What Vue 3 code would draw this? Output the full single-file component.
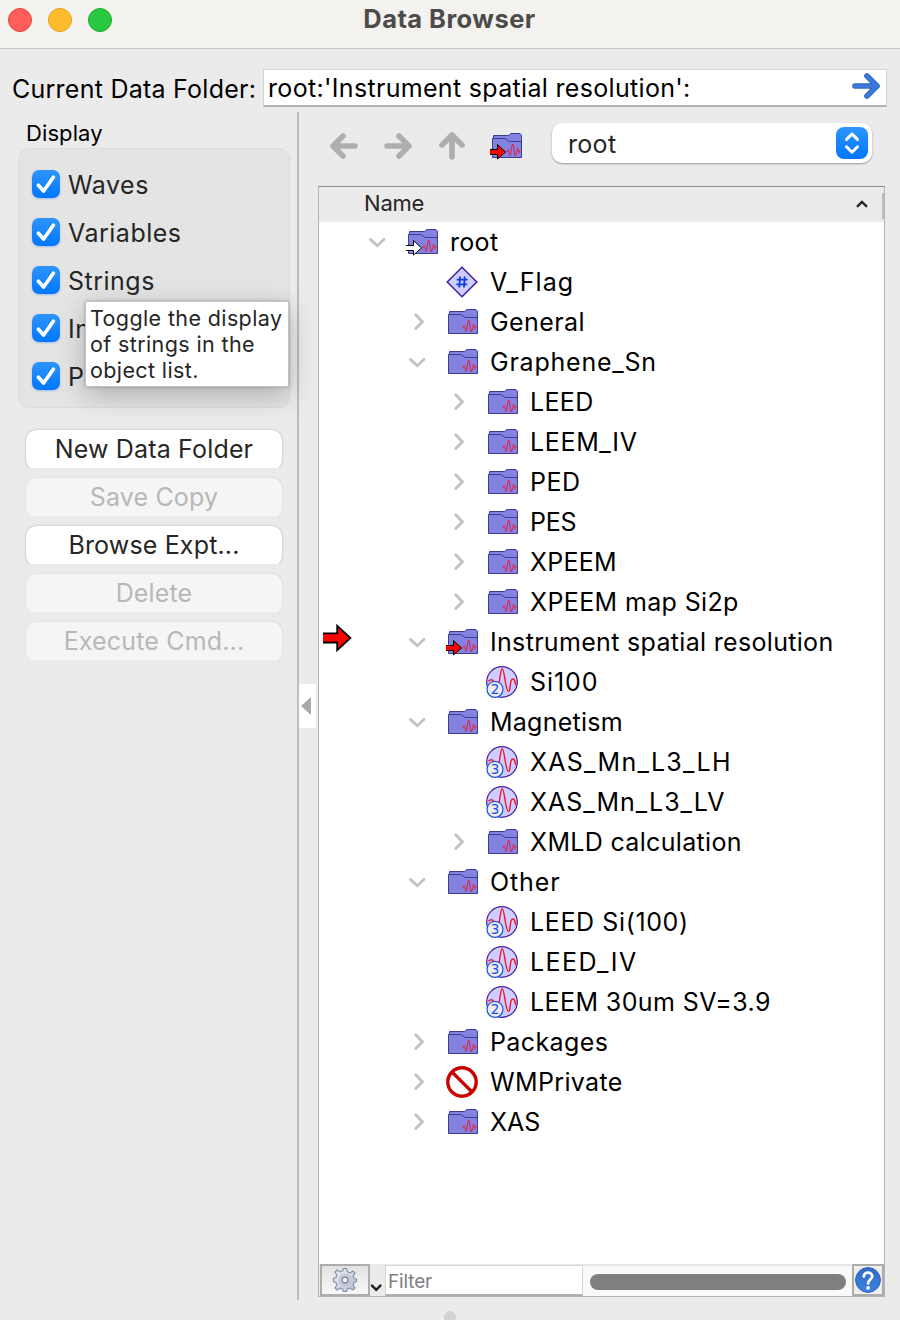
<script setup>
const checks = ['Waves', 'Variables', 'Strings', 'Info', 'Plot']

const actions = [
  { label: 'New Data Folder', enabled: true },
  { label: 'Save Copy', enabled: false },
  { label: 'Browse Expt...', enabled: true },
  { label: 'Delete', enabled: false },
  { label: 'Execute Cmd...', enabled: false },
]

// `track` is the letter spacing of the name, in pixels
const rows = [
  { name: 'root', level: 0, state: 'open', icon: 'folder', arrow: 'white', track: 0.3 },
  { name: 'V_Flag', level: 1, icon: 'variable', track: 1.1 },
  { name: 'General', level: 1, state: 'closed', icon: 'folder', track: 0.4 },
  { name: 'Graphene_Sn', level: 1, state: 'open', icon: 'folder', track: 0.78 },
  { name: 'LEED', level: 2, state: 'closed', icon: 'folder', track: 0.35 },
  { name: 'LEEM_IV', level: 2, state: 'closed', icon: 'folder', track: 0.65 },
  { name: 'PED', level: 2, state: 'closed', icon: 'folder', track: 0.5 },
  { name: 'PES', level: 2, state: 'closed', icon: 'folder', track: -0.3 },
  { name: 'XPEEM', level: 2, state: 'closed', icon: 'folder', track: 0.25 },
  { name: 'XPEEM map Si2p', level: 2, state: 'closed', icon: 'folder', track: 0.37 },
  { name: 'Instrument spatial resolution', level: 1, state: 'open', icon: 'folder', arrow: 'red', current: true, track: 0.32 },
  { name: 'Si100', level: 2, icon: 'wave', dims: 2, track: 0.95 },
  { name: 'Magnetism', level: 1, state: 'open', icon: 'folder', track: 0.25 },
  { name: 'XAS_Mn_L3_LH', level: 2, icon: 'wave', dims: 3, track: 1.25 },
  { name: 'XAS_Mn_L3_LV', level: 2, icon: 'wave', dims: 3, track: 0.98 },
  { name: 'XMLD calculation', level: 2, state: 'closed', icon: 'folder', track: 0.33 },
  { name: 'Other', level: 1, state: 'open', icon: 'folder', track: 0.9 },
  { name: 'LEED Si(100)', level: 2, icon: 'wave', dims: 3, track: 0.62 },
  { name: 'LEED_IV', level: 2, icon: 'wave', dims: 3, track: 1.45 },
  { name: 'LEEM 30um SV=3.9', level: 2, icon: 'wave', dims: 2, track: 0.4 },
  { name: 'Packages', level: 1, state: 'closed', icon: 'folder', track: 0.4 },
  { name: 'WMPrivate', level: 1, state: 'closed', icon: 'private', track: 0.35 },
  { name: 'XAS', level: 1, state: 'closed', icon: 'folder', track: 0 },
]
</script>

<template>
  <div class="window">
    <svg width="0" height="0" class="defs">
      <defs>
        <linearGradient id="gearFill" x1="0" y1="0" x2="1" y2="1">
          <stop offset="0" stop-color="#eef3f9" /><stop offset="1" stop-color="#b3bdcc" />
        </linearGradient>
        <linearGradient id="helpFill" x1="0" y1="0" x2="0" y2="1">
          <stop offset="0" stop-color="#2f6cc2" /><stop offset="1" stop-color="#3d83e2" />
        </linearGradient>
        <symbol id="folder" viewBox="0 0 32 32">
          <path d="M3.5 8.5V5.5H18.5L20.8 3.5H30L31.5 5.2V27.5H2.5V8.5Z" fill="#8482e0" stroke="#3c3c94" stroke-width="1" />
          <path d="M2.5 8.5H14.8L19.4 11.5H31.5" fill="none" stroke="#3c3c94" stroke-width="1" />
          <path d="M16.8 22.3C17.4 19.4 18.7 19.4 19 22S20.2 27.5 21 21.5S22.8 11.5 23.6 17S24.8 28 26 24.5S27.2 16.4 28.3 19.5S29 24 30 20.8" fill="none" stroke="#dd2850" stroke-width="1.1" />
        </symbol>
        <symbol id="badgeArrow" viewBox="0 0 17 17">
          <path d="M0 6.5H7.5V1.5L15.5 9L7.5 16V11.5H0" stroke="#000" stroke-width="1" />
        </symbol>
        <symbol id="variable" viewBox="0 0 32 32">
          <path d="M16 1.2L30.8 16L16 30.8L1.2 16Z" fill="#cdceff" stroke="#3d1f9c" stroke-width="1.5" />
          <path d="M14 10.5L13.3 21.5M18.7 10.5L18 21.5M10.7 13.7H21.6M10.3 18.3H21.2" fill="none" stroke="#0c3ce6" stroke-width="1.8" />
        </symbol>
        <symbol id="wave" viewBox="0 0 32 32">
          <circle cx="16" cy="16" r="15.3" fill="#cdceff" stroke="#3d1f9c" stroke-width="1.2" />
          <path d="M2.5 15.5C4.5 13 6.5 13.2 8 16L12 20C14 17 14.2 2.6 16.3 2.6S19.5 25.4 22.4 25.4S23.2 13 26.6 13S28.5 18.6 30.6 19.4" fill="none" stroke="#fb1020" stroke-width="1.4" />
          <circle cx="9" cy="23.3" r="8" fill="#ececec" stroke="#1b50dc" stroke-width="1.2" />
        </symbol>
        <symbol id="private" viewBox="0 0 32 32">
          <path d="M5.5 5.5L26.5 26.5" stroke="#c80000" stroke-width="3.2" />
          <circle cx="16" cy="16" r="14.2" fill="none" stroke="#c80000" stroke-width="3.4" />
        </symbol>
      </defs>
    </svg>

    <header class="titlebar">
      <div class="lights"><i class="light red"></i><i class="light amber"></i><i class="light green"></i></div>
      <h1 class="title">Data Browser</h1>
    </header>

    <div class="pathbar">
      <label class="pathlabel">Current Data Folder:</label>
      <div class="pathfield">
        <span class="path">root:'Instrument spatial resolution':</span>
        <svg class="go" width="28" height="28" viewBox="0 0 28 28"><path d="M3 14H24M15 4L25 14L15 24" fill="none" stroke="#2c66bf" stroke-width="5.6" stroke-linecap="round" stroke-linejoin="round" /><path d="M3 14H24M15 4L25 14L15 24" fill="none" stroke="#3b7ad8" stroke-width="3.6" stroke-linecap="round" stroke-linejoin="round" /></svg>
      </div>
    </div>

    <div class="body">
      <aside class="sidebar">
        <div class="grouptitle">Display</div>
        <div class="group">
          <div v-for="c in checks" :key="c" class="check">
            <span class="box"><svg width="28" height="28" viewBox="0 0 28 28"><path d="M6.4 15.2L11.6 21L21.4 7.2" fill="none" stroke="#fff" stroke-width="3.7" stroke-linecap="round" stroke-linejoin="round" /></svg></span>
            <span>{{ c }}</span>
          </div>
          <div class="tooltip">Toggle the display<br>of strings in the<br>object list.</div>
        </div>
        <div class="actions">
          <div v-for="a in actions" :key="a.label" class="clip">
            <button :class="['action', { off: !a.enabled }]">{{ a.label }}</button>
          </div>
        </div>
      </aside>

      <div class="splitter"><div class="collapse"></div></div>

      <main class="browser">
        <div class="toolbar">
          <svg class="nav" width="28" height="28" viewBox="0 0 28 28"><path d="M25 14H4M13 4L3 14L13 24" /></svg>
          <svg class="nav" width="28" height="28" viewBox="0 0 28 28"><path d="M3 14H24M15 4L25 14L15 24" /></svg>
          <svg class="nav" width="28" height="28" viewBox="0 0 28 28"><path d="M14 25V4M4 13L14 3L24 13" /></svg>
          <span class="icon"><svg width="32" height="32"><use href="#folder" /></svg><svg class="badge" width="17" height="17"><use href="#badgeArrow" fill="#f00" /></svg></span>
          <div class="select">
            <span class="chosen">root</span>
            <span class="stepper"><svg width="32" height="32" viewBox="0 0 32 32"><path d="M10.5 12.4L16 7L21.5 12.4M10.5 19.8L16 25.2L21.5 19.8" fill="none" stroke="#fff" stroke-width="3" stroke-linecap="round" stroke-linejoin="round" /></svg></span>
          </div>
        </div>

        <section class="tree">
          <div class="treehead">
            <span class="colname">Name</span>
            <svg class="sort" width="12" height="8" viewBox="0 0 12 8"><path d="M1.7 6.2L6 2L10.3 6.2" fill="none" stroke="#262626" stroke-width="2.4" stroke-linecap="round" /></svg>
            <i class="colgrip"></i>
          </div>
          <div class="rows">
            <div v-for="r in rows" :key="r.name" :class="['row', 'level' + r.level]">
              <div class="gutter">
                <svg v-if="r.current" width="30" height="30" viewBox="0 0 30 30"><path d="M0 10.4H14.2V2.7L27.4 15L14.2 27.2V19.5H0" fill="#f00" stroke="#000" stroke-width="1.8" /></svg>
              </div>
              <div class="twisty">
                <svg v-if="r.state === 'open'" width="24" height="24" viewBox="0 0 24 24"><path d="M4.5 9.5L11.2 15.7L17.9 9.5" /></svg>
                <svg v-if="r.state === 'closed'" width="24" height="24" viewBox="0 0 24 24"><path d="M9.7 4.8L16.4 11.7L9.7 18.6" /></svg>
              </div>
              <span class="icon">
                <svg width="32" height="32"><use :href="'#' + r.icon" /><text v-if="r.dims" x="9" y="28.2" class="dims">{{ r.dims }}</text></svg>
                <svg v-if="r.arrow" class="badge" width="17" height="17"><use href="#badgeArrow" :fill="r.arrow === 'red' ? '#f00' : '#fff'" /></svg>
              </span>
              <span class="name" :style="{ letterSpacing: r.track + 'px' }">{{ r.name }}</span>
            </div>
          </div>
          <footer class="treefoot">
            <div class="gear">
              <svg width="26" height="26" viewBox="0 0 26 26"><path d="M11.4 1.5H14.6L15.3 4.8L18 5.9L20.8 4L23 6.2L21.1 9L22.2 11.7L24.5 12V14.6L22.2 15.3L21.1 18L23 20.8L20.8 23L18 21.1L15.3 22.2L14.6 24.5H11.4L10.7 22.2L8 21.1L5.2 23L3 20.8L4.9 18L3.8 15.3L1.5 14.6V11.4L3.8 10.7L4.9 8L3 5.2L5.2 3L8 4.9L10.7 3.8Z" fill="url(#gearFill)" stroke="#7d8da5" stroke-width="1.1" stroke-linejoin="round" /><circle cx="13" cy="13" r="5.6" fill="none" stroke="#b4bfce" stroke-width="1.3" /><circle cx="13" cy="13" r="3" fill="#f5f5f5" stroke="#7888a0" stroke-width="1.3" /></svg>
            </div>
            <svg class="menu" width="15" height="32" viewBox="0 0 15 32"><path d="M2 21.7L6.2 25.8L10.4 21.7" fill="none" stroke="#222" stroke-width="2.5" stroke-linecap="round" /></svg>
            <div class="filter">Filter</div>
            <div class="scroll"><i></i></div>
            <div class="help"><svg width="26" height="26" viewBox="0 0 26 26"><circle cx="13" cy="13" r="12.4" fill="url(#helpFill)" stroke="#2a62b8" /><path d="M8.8 9.6C8.8 4.4 17.2 4.4 17.2 9.2C17.2 12.6 13.1 12.4 13.1 16.4" fill="none" stroke="#fff" stroke-width="2.8" stroke-linecap="round" /><circle cx="13.1" cy="20.8" r="1.9" fill="#fff" /></svg></div>
          </footer>
        </section>
      </main>
    </div>
    <i class="handle"></i>
  </div>
</template>

<style>
body { margin: 0; background: #ebebeb; }
</style>

<style scoped>
* { box-sizing: border-box; }
.window { position: relative; width: 900px; height: 1320px; overflow: hidden; display: flex; flex-direction: column; background: #ebebeb; color: #000; font-family: Inter, "Liberation Sans", sans-serif; font-size: 25px; white-space: nowrap; }
.defs { position: absolute; }
.titlebar { height: 49px; flex: none; position: relative; background: #f4f2ee; border-bottom: 1px solid #c6c6c4; display: flex; justify-content: center; }
.lights { position: absolute; left: 8px; top: 8px; display: flex; gap: 16px; }
.light { width: 24px; height: 24px; border-radius: 50%; border: 1px solid; }
.red { background: #ff5f57; border-color: #e0443e; }
.amber { background: #febc2e; border-color: #dea123; }
.green { background: #28c840; border-color: #1aab29; }
.title { margin: 0 0 0 -1px; font-size: 25.5px; letter-spacing: .45px; line-height: 38px; font-weight: 700; color: #4c4b4a; }
.pathbar { height: 38px; margin-top: 20px; flex: none; display: flex; align-items: center; padding: 0 13px 0 12px; }
.pathlabel { width: 251px; line-height: 38px; padding-top: 2px; letter-spacing: .25px; }
.pathfield { flex: 1; height: 38px; display: flex; align-items: center; justify-content: space-between; padding: 0 6px 3px 4px; background: #fff; border: 1px solid #d4d4d4; border-bottom: 2px solid #b4b4b4; }
.path { padding-top: 4px; letter-spacing: .32px; }
.go { margin-top: -1px; }
.body { flex: 1; display: flex; margin-top: 5px; min-height: 0; }
.sidebar { width: 297px; flex: none; }
.grouptitle { font-size: 22px; line-height: 26px; padding: 8px 0 0 26px; height: 36px; letter-spacing: .1px; }
.group { position: relative; margin-left: 18px; width: 272px; height: 260px; border: 1px solid #dcdcdc; border-radius: 11px; background: #e4e4e4; padding: 12px 0 0 13px; color: #262626; }
.check { height: 48px; display: flex; align-items: center; gap: 8px; letter-spacing: .5px; }
.box { width: 28px; height: 28px; margin-top: -2px; border-radius: 7px; background: linear-gradient(#3094ff, #0077fe); box-shadow: 0 1px 2px rgba(0, 90, 220, .3); }
.box svg { display: block; }
.tooltip { position: absolute; left: 66px; top: 152px; width: 204px; height: 86px; padding: 3px 4px; background: rgba(255, 255, 255, .985); border: 1px solid #c4c4c4; box-shadow: 0 8px 28px rgba(0, 0, 0, .24), 0 0 3px rgba(0, 0, 0, .25); font-size: 21.5px; letter-spacing: .38px; line-height: 26px; color: #262626; z-index: 2; }
.actions { padding: 20px 0 0 24px; display: flex; flex-direction: column; gap: 8px; }
.clip { height: 40px; width: 260px; padding: 2px 2px 0; overflow: hidden; }
.action { width: 256px; height: 40px; border: 0; border-radius: 10px; background: #fff; box-shadow: 0 0 2px rgba(0, 0, 0, .35); font: inherit; letter-spacing: .16px; line-height: 36px; padding: 0 0 2px; color: #262626; display: block; }
.off { background: #f5f5f5; color: #b8b8b8; box-shadow: 0 0 2px rgba(0, 0, 0, .14); }
.splitter { width: 2px; height: 1188px; background: #bdbdbd; position: relative; }
.collapse { position: absolute; left: 2px; top: 572px; width: 17px; height: 44px; background: #fff; }
.collapse::before { content: ""; position: absolute; left: 2px; top: 13px; border: solid transparent; border-width: 9px 10px 9px 0; border-right-color: #a9a9a9; }
.browser { flex: 1; padding-left: 19px; }
.toolbar { height: 74px; padding: 11px 0 0 12px; display: flex; }
.nav { margin: 9px 26px 0 0; }
.nav path { fill: none; stroke: #aeaeae; stroke-width: 5.6; stroke-linecap: round; stroke-linejoin: round; }
.icon { position: relative; width: 32px; height: 32px; flex: none; }
.icon svg { display: block; }
.toolbar .icon { margin: 7px 30px 0 -2px; }
.icon .badge { position: absolute; left: 0; top: 13px; }
.select { width: 320px; height: 40px; display: flex; justify-content: space-between; align-items: center; padding: 0 4px 0 16px; border-radius: 10px; background: #fff; box-shadow: 0 1px 2px rgba(0, 0, 0, .35); color: #262626; }
.chosen { padding-top: 2px; letter-spacing: .3px; }
.stepper { width: 32px; height: 32px; border-radius: 8px; background: linear-gradient(#3094ff, #0077fe); }
.tree { width: 567px; height: 1111px; border: 1px solid #b4b4b4; border-top-color: #8c8c8c; background: #fff; display: flex; flex-direction: column; }
.treehead { height: 35px; flex: none; background: #ebebeb; display: flex; align-items: center; padding-left: 45px; font-size: 22px; letter-spacing: -.2px; color: #262626; }
.colname { margin-top: -3px; }
.sort { margin: -1px 14px 0 auto; }
.colgrip { width: 2px; height: 26px; background: #bdbdbd; margin-top: 2px; }
.rows { flex: 1; }
.row { height: 40px; display: flex; align-items: center; }
.gutter { width: 47px; padding-left: 4px; margin-top: -9px; height: 30px; }
.level1 .gutter { width: 87px; }
.level2 .gutter { width: 127px; }
.twisty { width: 24px; height: 24px; margin-right: 16px; }
.twisty path { fill: none; stroke: #c0c0c0; stroke-width: 2.8; stroke-linecap: round; }
.name { margin-left: 12px; }
.dims { font: 13.5px "DejaVu Sans", sans-serif; fill: #1b50dc; text-anchor: middle; }
.treefoot { height: 32px; flex: none; display: flex; background: #ebebeb; }
.gear { width: 50px; margin-left: 1px; border: 2px solid #adadad; background: linear-gradient(#e2e2e2, #f8f8f8); display: flex; align-items: center; justify-content: center; }
.menu { width: 15px; }
.filter { width: 198px; margin-top: 1px; height: 31px; background: #fff; border: 1px solid #d4d4d4; border-bottom: 2px solid #b0b0b0; padding-left: 2px; font-size: 19px; letter-spacing: -.15px; line-height: 32px; color: #808080; }
.scroll { flex: 1; background: #fafafa; border-top: 2px solid #e6e6e6; padding: 8px 6px 0 7px; }
.scroll i { display: block; height: 16px; border-radius: 8px; background: #7f7f7f; }
.help { width: 32px; border: 2px solid #adadad; background: #eee; display: flex; align-items: center; justify-content: center; }
.handle { position: absolute; left: 444px; top: 1311px; width: 12px; height: 12px; border-radius: 50%; background: #d3d3d3; }
</style>
